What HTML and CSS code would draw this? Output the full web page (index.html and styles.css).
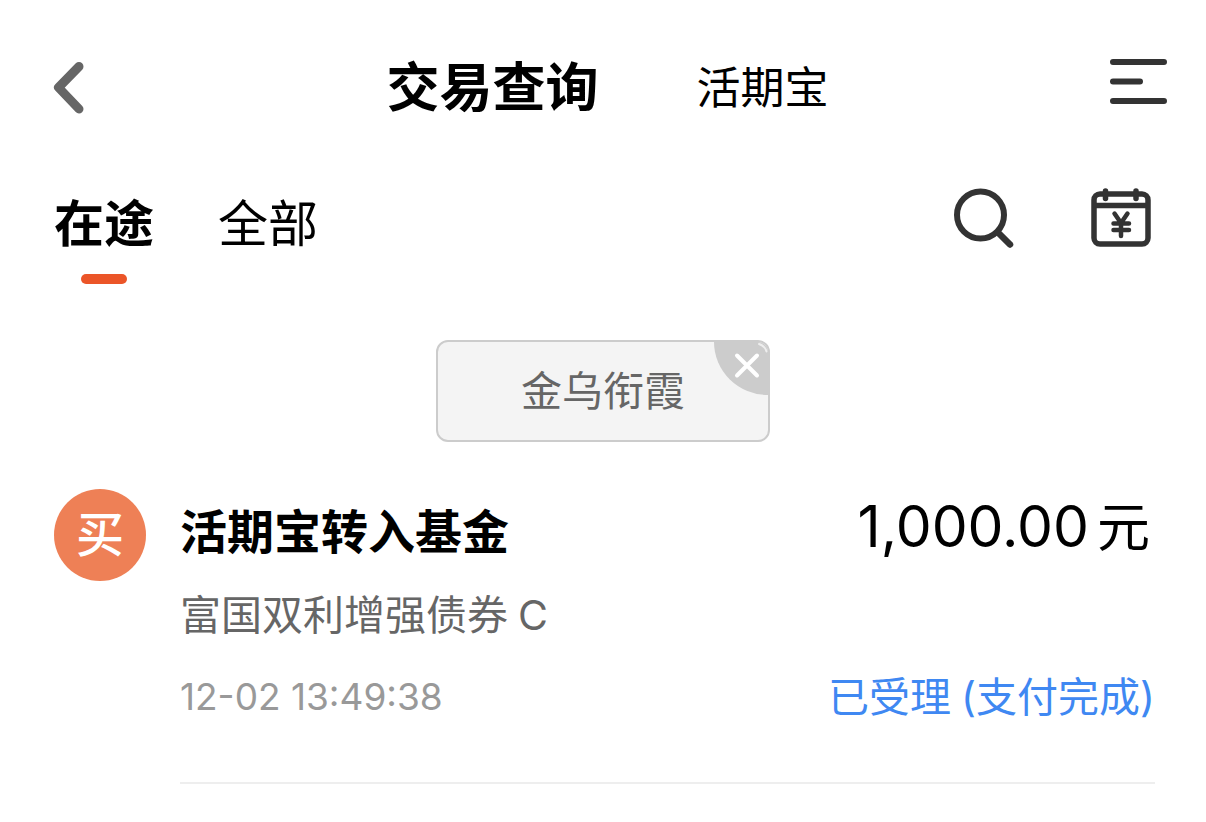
FILE: index.html
```html
<!DOCTYPE html>
<html lang="zh-CN">
<head>
<meta charset="utf-8">
<meta name="viewport" content="width=device-width, initial-scale=1">
<title>交易查询</title>
<link rel="stylesheet" href="styles.css">
</head>
<body>
<header class="topbar">
  <button class="icon-btn back" type="button" aria-label="返回">
    <svg width="40" height="56" viewBox="0 0 40 56" fill="none" stroke="#666" stroke-width="9" stroke-linecap="round" stroke-linejoin="round"><path d="M31 6.500 10.500 27.500 31 49"/></svg>
  </button>
  <nav class="sections" aria-label="栏目">
    <a class="section current" href="#trade">交易查询</a>
    <a class="section" href="#hqb">活期宝</a>
  </nav>
  <button class="icon-btn menu" type="button" aria-label="菜单">
    <svg width="58" height="48" viewBox="0 0 58 48" fill="none" stroke="#333" stroke-width="6" stroke-linecap="round"><path d="M4 4h51M4 23.500h27M4 43h51"/></svg>
  </button>
</header>

<div class="toolbar">
  <nav class="tabs" aria-label="筛选">
    <a class="tab active" href="#pending">在途</a>
    <a class="tab" href="#all">全部</a>
  </nav>
  <div class="tools">
    <button class="icon-btn" type="button" aria-label="搜索">
      <svg width="62" height="62" viewBox="0 0 62 62" fill="none" stroke="#333" stroke-linecap="round"><circle cx="27.500" cy="27" r="23.500" stroke-width="6"/><path d="M45 44.500l12 12" stroke-width="6.500"/></svg>
    </button>
    <button class="icon-btn" type="button" aria-label="交易日历">
      <svg width="60" height="60" viewBox="0 0 60 60" fill="none" stroke="#333" stroke-linecap="round" stroke-linejoin="round"><rect x="3" y="6" width="54" height="50" rx="6" stroke-width="5.500"/><path d="M4 17.500h53" stroke-width="5.500" stroke-linecap="butt"/><path d="M14.500 3v7.500M45 3v7.500" stroke-width="5.500"/><path d="M23.500 25.500l6.500 9.500 6.500-9.500M30 35v13M22.500 35.500h15.500M22.500 42h15.500" stroke-width="4.500"/></svg>
    </button>
  </div>
</div>

<main>
  <div class="filter">
    <div class="chip">
      <span>金乌衔霞</span>
      <button class="chip-close" type="button" aria-label="移除">
        <svg width="54" height="54" viewBox="0 0 54 54" fill="none" stroke="#fff" stroke-linecap="round"><path d="M0 0h54v53A54 53 0 0 1 0 0z" fill="#ccc" stroke="none"/><path d="M23 13.500l20 20M43 13.500l-20 20" stroke-width="4"/><path d="M45 2q6 2 7.500 7.500" stroke-width="2" stroke="#eee"/></svg>
      </button>
    </div>
  </div>

  <ul class="records">
    <li class="record">
      <span class="badge">买</span>
      <div class="body">
        <div class="line">
          <h2 class="name">活期宝转入基金</h2>
          <p class="amount"><span class="number">1,000.00</span><span class="unit">元</span></p>
        </div>
        <p class="fund"><span>富国双利增强债券</span><span>C</span></p>
        <div class="line">
          <time class="time">12-02 13:49:38</time>
          <p class="status"><span>已受理</span><span>(支付完成)</span></p>
        </div>
      </div>
    </li>
  </ul>
</main>
</body>
</html>
```

FILE: styles.css
```css
* {
  box-sizing: border-box;
}

body {
  margin: 0;
  background: #fff;
  color: #000;
  font-family: Inter, "Noto Sans CJK SC", sans-serif;
}

h2,
p,
ul {
  margin: 0;
  padding: 0;
  font-weight: 400;
}

a {
  color: inherit;
  text-decoration: none;
}

svg {
  display: block;
}

.icon-btn {
  padding: 0;
  border: 0;
  background: none;
}

.topbar {
  display: grid;
  grid-template-columns: 1fr auto 1fr;
  align-items: center;
  padding: 48px 39px 0 48px;
}

.menu {
  justify-self: end;
  padding-bottom: 12px;
}

.sections {
  display: flex;
  align-items: center;
  gap: 98px;
  line-height: 80px;
}

.section {
  font-size: 44px;
}

.section.current {
  font-size: 53px;
  font-weight: 700;
}

.toolbar {
  display: flex;
  justify-content: space-between;
  padding: 56px 55px 0 54px;
}

.tabs {
  display: flex;
  gap: 64px;
}

.tab {
  display: flex;
  flex-direction: column;
  align-items: center;
  gap: 10px;
  font-size: 50px;
  line-height: 80px;
}

.tab.active {
  font-weight: 700;
}

.tab.active::after {
  content: "";
  width: 46px;
  height: 10px;
  border-radius: 5px;
  background: #eb5528;
}

.tools {
  display: flex;
  align-items: flex-start;
  gap: 76px;
  padding-top: 4px;
}

.filter {
  display: flex;
  justify-content: center;
  padding-top: 56px;
}

.chip {
  position: relative;
  overflow: hidden;
  padding: 0 83px;
  border: 2px solid #ccc;
  border-radius: 12px;
  background: #f4f4f4;
  color: #666;
  font-size: 41px;
  line-height: 98px;
}

.chip-close {
  position: absolute;
  top: 0;
  right: 0;
  padding: 0;
  border: 0;
  background: none;
}

.records {
  padding: 47px 51px 0 54px;
  list-style: none;
}

.record {
  display: flex;
  align-items: flex-start;
  gap: 34px;
}

.badge {
  flex: none;
  width: 92px;
  border-radius: 50%;
  background: #ee8056;
  color: #fff;
  font-size: 48px;
  font-weight: 500;
  line-height: 92px;
  text-align: center;
}

.body {
  flex: 1;
  padding-bottom: 43px;
  border-bottom: 2px solid #eee;
}

.line {
  display: flex;
  align-items: flex-start;
  justify-content: space-between;
}

.name {
  font-size: 47px;
  font-weight: 700;
  line-height: 86px;
}

.amount {
  display: flex;
  align-items: baseline;
  gap: 8px;
  padding-right: 5px;
  line-height: 76px;
}

.number {
  font-size: 57px;
}

.unit {
  font-size: 53px;
}

.fund {
  display: flex;
  gap: 10px;
  color: #666;
  font-size: 41px;
  line-height: 80px;
}

.time {
  color: #999;
  font-size: 37px;
  line-height: 84px;
}

.status {
  display: flex;
  gap: 10px;
  color: #3f88f2;
  font-size: 41px;
  line-height: 84px;
}
```
